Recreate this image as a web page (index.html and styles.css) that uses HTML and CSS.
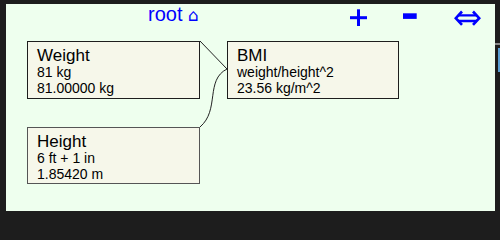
FILE: index.html
```html
<!DOCTYPE html>
<html>
<head>
<meta charset="utf-8">
<link rel="stylesheet" href="styles.css">
</head>
<body>
<div class="panel">
  <div class="toolbar">
    <div class="title">root <span class="home">⌂</span></div>
    <div class="buttons">
      <svg class="btn plus" width="17" height="30" viewBox="0 0 17 30">
        <rect x="0" y="12.2" width="17" height="3" fill="#0000ff"/>
        <rect x="7" y="5.3" width="3" height="16.7" fill="#0000ff"/>
      </svg>
      <svg class="btn minus" width="14" height="30" viewBox="0 0 14 30">
        <rect x="0" y="9.3" width="13.7" height="5.6" fill="#0000ff"/>
      </svg>
      <svg class="btn swap" width="27" height="30" viewBox="0 0 27 30">
        <path d="M8 7.5 L1.8 14.2 L8 20.9 M19 7.5 L25.2 14.2 L19 20.9" fill="none" stroke="#0000ff" stroke-width="2.6" stroke-linejoin="miter"/>
        <path d="M4 11.4 H23 M4 17 H23" fill="none" stroke="#0000ff" stroke-width="2.4"/>
      </svg>
    </div>
  </div>
  <svg class="links" width="489" height="207" viewBox="0 0 489 207">
    <path d="M194 37 L221 65" fill="none" stroke="#222" stroke-width="1"/>
    <path d="M194 123 C214 106 199 76 221 65" fill="none" stroke="#222" stroke-width="1"/>
  </svg>
  <div class="node node-weight">
    <div class="node-title">Weight</div>
    <div class="node-line">81 kg</div>
    <div class="node-line">81.00000 kg</div>
  </div>
  <div class="node node-bmi">
    <div class="node-title">BMI</div>
    <div class="node-line">weight/height^2</div>
    <div class="node-line">23.56 kg/m^2</div>
  </div>
  <div class="node node-height">
    <div class="node-title">Height</div>
    <div class="node-line">6 ft + 1 in</div>
    <div class="node-line">1.85420 m</div>
  </div>
</div>
<div class="side">
  <div class="side-rule"></div>
  <div class="side-thumb"></div>
</div>
</body>
</html>
```

FILE: styles.css
```css
html, body {
  margin: 0;
  padding: 0;
}
body {
  background: #1d1d1d;
  height: 211px;
  overflow: hidden;
  display: flex;
  padding: 4px 0 0 6px;
  box-sizing: border-box;
  font-family: "Liberation Sans", Arial, sans-serif;
}
.panel {
  position: relative;
  width: 489px;
  height: 207px;
  background: #eeffee;
  flex: none;
}
.toolbar {
  display: flex;
  align-items: flex-start;
  height: 30px;
}
.title {
  margin-left: 142px;
  color: #0000ff;
  font-size: 20px;
  line-height: 20px;
  height: 20px;
  white-space: nowrap;
}
.home {
  font-family: "DejaVu Sans", sans-serif;
  font-size: 17px;
  line-height: 20px;
}
.buttons {
  display: flex;
  margin-left: auto;
  margin-right: 14px;
}
.btn {
  display: block;
}
.minus {
  margin-left: 36px;
}
.swap {
  margin-left: 37px;
}
.links {
  position: absolute;
  left: 0;
  top: 0;
}
.node {
  position: absolute;
  box-sizing: border-box;
  background: #f6f7ea;
  border: 1px solid #1e1e1e;
  padding: 5px 0 0 9px;
  color: #000;
  white-space: nowrap;
}
.node-weight {
  left: 21px;
  top: 37px;
  width: 173px;
  height: 58px;
}
.node-bmi {
  left: 221px;
  top: 37px;
  width: 172px;
  height: 58px;
}
.node-height {
  left: 21px;
  top: 123px;
  width: 173px;
  height: 57px;
  border-color: #555;
}
.node-title {
  font-size: 17px;
  line-height: 17px;
}
.node-line {
  font-size: 14px;
  line-height: 16px;
}
.side {
  width: 5px;
  flex: none;
  padding-top: 39px;
}
.side-rule {
  height: 2px;
  background: #8a8a8a;
}
.side-thumb {
  margin: 3px 0 0 3px;
  height: 24px;
  background: #5a9fd4;
}
```
